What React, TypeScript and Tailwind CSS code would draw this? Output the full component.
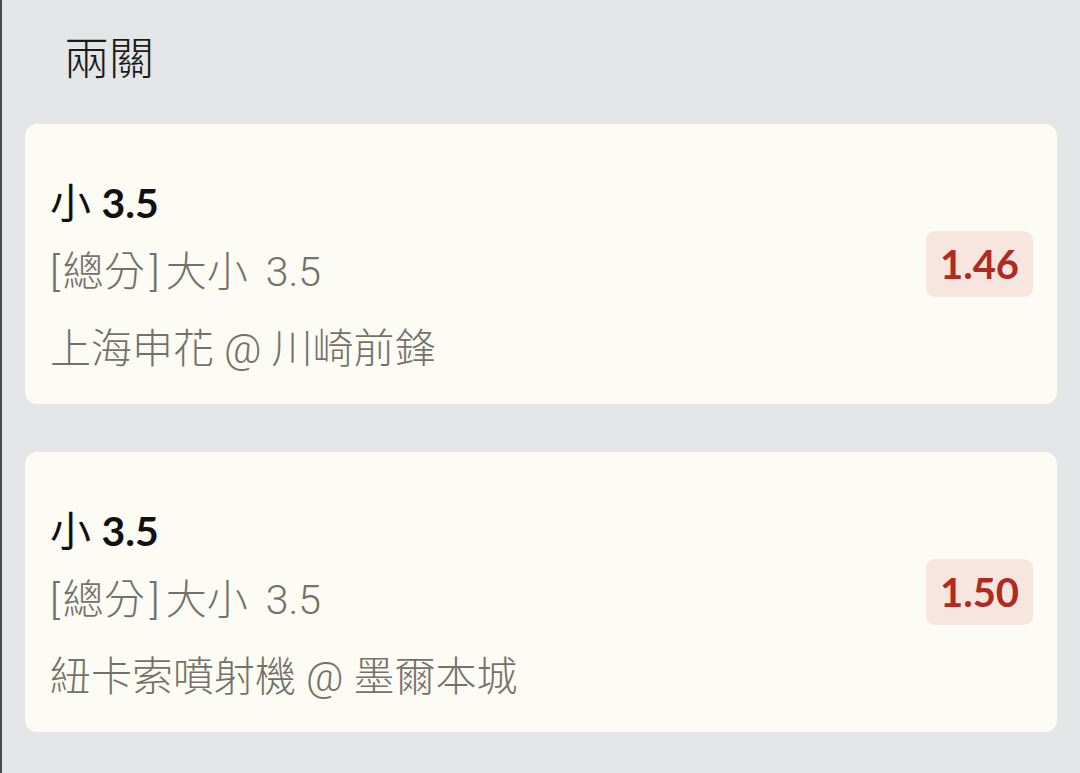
import React from 'react';

const bets = [
  { pick: '小', line: '3.5', tag: '總分', market: '大小 3.5', match: '上海申花 @ 川崎前鋒', odds: '1.46' },
  { pick: '小', line: '3.5', tag: '總分', market: '大小 3.5', match: '紐卡索噴射機 @ 墨爾本城', odds: '1.50' },
];

const lato = { fontFamily: 'Lato, "Noto Sans CJK TC", sans-serif' };
const cjk = { fontFamily: '"Noto Sans CJK TC", "Noto Sans", sans-serif' };
const grey = { fontFamily: 'Roboto, "Noto Sans CJK TC", sans-serif' };

export default function App() {
  return (
    <div
      className="w-[1080px] h-[773px] bg-[#e4e5e7] border-l-2 border-[#4a4a4a] overflow-hidden"
      style={lato}
    >
      <h1
        className="pl-[62px] pt-[28px] h-[124px] text-[45px] leading-[56px] font-light text-[#1a1a1a]"
        style={cjk}
      >
        兩關
      </h1>
      <div className="flex flex-col gap-[48px] pl-[23px] pr-[23px]">
        {bets.map((b, i) => (
          <div
            key={i}
            className="flex items-start justify-between h-[280px] rounded-[12px] bg-[#fdfcf4] pl-[25px] pr-[24px]"
          >
            <div className="pt-[45px]">
              <div className="h-[66px] leading-[62px] text-[41px] text-[#111111]">
                <span className="font-normal" style={cjk}>{b.pick}</span>{' '}
                <span className="font-bold">{b.line}</span>
              </div>
              <div className="h-[75px] leading-[74px] text-[41px] font-light text-[#74716b]" style={grey}>
                <span className="mr-[3px]">[</span>
                {b.tag}
                <span className="ml-[5px] mr-[6px]">]</span>
                {b.market.split(' ')[0]}
                <span className="ml-[18px]">{b.market.split(' ')[1]}</span>
              </div>
              <div className="h-[78px] leading-[78px] text-[41px] font-light text-[#74716b]" style={grey}>
                {b.match}
              </div>
            </div>
            <div className="self-center flex items-center justify-center w-[107px] h-[66px] rounded-[9px] bg-[#f6e6df] text-[40px] font-bold text-[#b02a22]">
              {b.odds}
            </div>
          </div>
        ))}
      </div>
    </div>
  );
}
